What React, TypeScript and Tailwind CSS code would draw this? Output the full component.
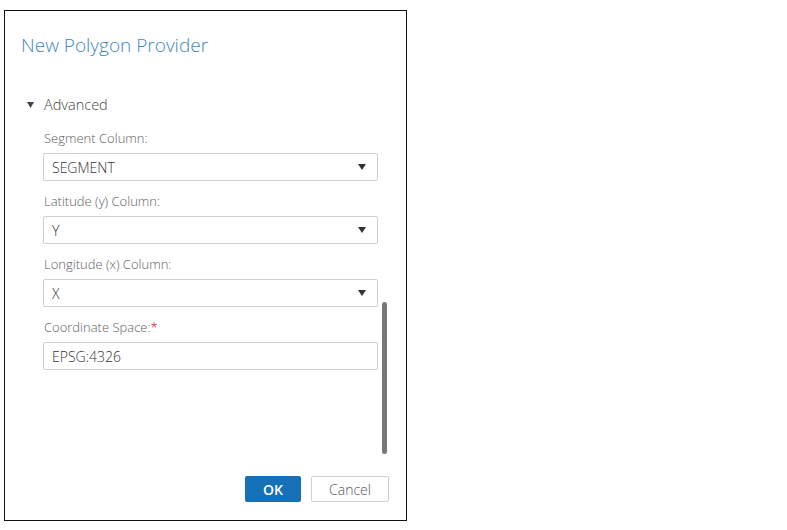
import { ReactNode } from 'react';

const Caret = () => (
  <svg width="8" height="6" viewBox="0 0 8 6" className="shrink-0">
    <path d="M0 0 H8 L4 6 Z" fill="#333" />
  </svg>
);

function Field({ label, required, children }: { label: string; required?: boolean; children: ReactNode }) {
  return (
    <div className="flex flex-col">
      <div className="h-[18px] leading-[18px] pl-[1px] text-[13px] font-light text-[#5e5e5e]">
        {label}
        {required && <span className="text-[#d0021b]">*</span>}
      </div>
      <div className="mt-[6px]">{children}</div>
    </div>
  );
}

function Select({ value }: { value: string }) {
  return (
    <div className="flex h-[28px] w-[335px] items-center justify-between rounded-[2px] border border-[#cfcfcf] bg-white pl-[8px] pr-[11px] text-[14px] font-light text-[#333]">
      <span>{value}</span>
      <Caret />
    </div>
  );
}

export default function App() {
  return (
    <div className="h-[530px] w-[787px] bg-white pt-[10px] pl-[4px]" style={{ fontFamily: '"Open Sans", Lato, sans-serif' }}>
      <div className="relative flex h-[511px] w-[403px] flex-col border border-[#111]">
        <div className="pl-[16px] pt-[22px] h-[24px] box-content text-[19px] font-light leading-[24px] text-[#3e87c4]">New Polygon Provider</div>

        <div className="mt-[38px] flex h-[20px] items-center pl-[22px] text-[14.5px] font-light text-[#444]">
          <svg width="7" height="6" viewBox="0 0 7 6" className="mr-[10px]">
            <path d="M0 0 H7 L3.5 6 Z" fill="#444" />
          </svg>
          Advanced
        </div>

        <div className="mt-[14px] flex flex-col gap-[11px] pl-[38px]">
          <Field label="Segment Column:">
            <Select value="SEGMENT" />
          </Field>
          <Field label="Latitude (y) Column:">
            <Select value="Y" />
          </Field>
          <Field label="Longitude (x) Column:">
            <Select value="X" />
          </Field>
          <Field label="Coordinate Space:" required>
            <div className="flex h-[28px] w-[335px] items-center rounded-[2px] border border-[#cfcfcf] bg-white pl-[8px] text-[14px] font-light text-[#333]">
              EPSG:4326
            </div>
          </Field>
        </div>

        <div className="absolute left-[377px] top-[291px] h-[152px] w-[5px] rounded-full bg-[#777]" />

        <div className="mt-auto flex justify-end gap-[10px] pb-[18px] pr-[17px]">
          <button className="h-[26px] w-[56px] rounded-[2px] bg-[#1570b8] text-[14px] font-semibold text-white">OK</button>
          <button className="h-[26px] w-[78px] rounded-[2px] border border-[#cfcfcf] bg-white text-[14px] font-light text-[#555]">Cancel</button>
        </div>
      </div>
    </div>
  );
}
